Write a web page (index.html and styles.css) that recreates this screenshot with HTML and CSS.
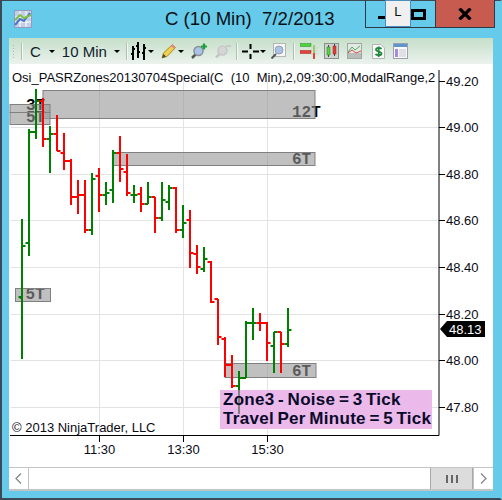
FILE: index.html
```html
<!DOCTYPE html>
<html lang="en">
<head>
  <meta charset="UTF-8">
  <title>C (10 Min) 7/2/2013</title>
  <link rel="stylesheet" href="styles.css">
</head>
<body>
  <div class="window">

    <!-- Title bar -->
    <header class="titlebar">
      <svg class="app-icon" width="18" height="18" viewBox="0 0 18 18">
        <rect x="0.5" y="0.5" width="17" height="17" fill="#c4cfe6" stroke="#8d9cc0"/>
        <path d="M1 7H17M1 12H17M6 1V17M12 1V17" stroke="#fff" fill="none"/>
        <path d="M1 15L6 9L10 11L16 3" stroke="#4a74c4" stroke-width="2" fill="none"/>
        <path d="M1 10L6 5L10 8L17 5" stroke="#7cc04a" stroke-width="2" fill="none"/>
      </svg>
      <h1 class="title">C (10 Min)&nbsp; 7/2/2013</h1>
      <div class="controls">
        <span class="ctl-min"></span>
        <span class="ctl-tip">L</span>
        <span class="ctl-max"></span>
        <span class="ctl-close">
          <svg width="14" height="12" viewBox="0 0 14 12"><path d="M1.500 0.500L12.500 11.500M12.500 0.500L1.500 11.500" stroke="#000" stroke-width="3.200"/></svg>
        </span>
      </div>
    </header>

    <div class="panel">

      <!-- Toolbar -->
      <div class="toolbar">
        <span class="grip"></span>
        <span class="sep sep-first"></span>
        <span class="tb-text tb-symbol">C</span><span class="caret caret-symbol"></span>
        <span class="tb-text tb-period">10 Min</span><span class="caret caret-period"></span>
        <span class="sep sep-bars"></span>

        <svg class="tb-icon" width="16" height="18" viewBox="0 0 16 18">
          <path d="M2 4V18M7 0V16M13 2V18" stroke="#000" stroke-width="2" fill="none"/>
          <path d="M0 12H2M2 7H4M5 4H7M7 10H9M11 11H13M13 6H15" stroke="#000" stroke-width="2" fill="none"/>
        </svg>
        <span class="caret caret-bars"></span>

        <svg class="tb-icon icon-pencil" width="16" height="16" viewBox="0 0 16 16">
          <path d="M1 15L2.500 10L11.500 1.500L14.500 4.500L6 13.500Z" fill="#f3d04a" stroke="#a78a2c"/>
          <path d="M11.500 1.500L14.500 4.500L13 6L10 3Z" fill="#e58a8a"/>
          <path d="M1 15L2.500 11L5 13.500Z" fill="#444"/>
        </svg>
        <span class="caret caret-pencil"></span>

        <svg class="tb-icon icon-add" width="16" height="16" viewBox="0 0 16 16">
          <path d="M1 15L5 11" stroke="#555" stroke-width="2.500"/>
          <circle cx="7.500" cy="8" r="4.500" fill="#a9c4e6" stroke="#8a8f98" stroke-width="1.500"/>
          <path d="M13 0.500V6.500M10 3.500H16" stroke="#18a03c" stroke-width="2.200"/>
        </svg>
        <svg class="tb-icon icon-gray" width="16" height="14" viewBox="0 0 16 14">
          <path d="M1 13.500L5 9.500" stroke="#c4c4c4" stroke-width="2.500"/>
          <circle cx="7.500" cy="6.500" r="4.500" fill="#d5d5d5" stroke="#c6c6c6" stroke-width="1.500"/>
          <path d="M11 2H16" stroke="#c8c8c8" stroke-width="2"/>
        </svg>
        <span class="sep sep-cross"></span>

        <svg class="tb-icon icon-cross" width="17" height="15" viewBox="0 0 17 15">
          <path d="M0 7.500H6M11 7.500H17M8.500 0V5M8.500 10V15" stroke="#000" stroke-width="2"/>
        </svg>
        <span class="caret caret-cross"></span>

        <svg class="tb-icon icon-search" width="15" height="16" viewBox="0 0 15 16">
          <rect x="2.500" y="0.500" width="12" height="13" fill="#f6f6f6" stroke="#b5b5b5"/>
          <circle cx="8" cy="7" r="4" fill="#a9c4e6" stroke="#96a0ae"/>
          <path d="M0.500 15.500L5 11" stroke="#555" stroke-width="2"/>
        </svg>
        <span class="sep sep-tools"></span>

        <svg class="tb-icon icon-colors" width="18" height="16" viewBox="0 0 18 16">
          <path d="M11 5H18M11 8H18M11 11H18" stroke="#c8d6c8"/>
          <rect x="0" y="0.500" width="11" height="3" fill="#4cd43c" stroke="#2c8a24" stroke-width="0.500"/>
          <rect x="0" y="7.500" width="11" height="3" fill="#e8403c" stroke="#a02420" stroke-width="0.500"/>
          <rect x="13" y="2" width="2" height="14" fill="#9acb6c"/>
          <rect x="13" y="10" width="2" height="6" fill="#e8403c"/>
        </svg>
        <svg class="tb-icon icon-framed" width="15" height="16" viewBox="0 0 15 16">
          <rect x="0.500" y="0.500" width="14" height="15" fill="#cfd3cf" stroke="#8b8f8b"/>
          <path d="M4.500 2V14M10.500 1V13" stroke="#444" fill="none"/>
          <rect x="3" y="4" width="3" height="8" fill="#54d63a" stroke="#2f7a22" stroke-width="0.500"/>
          <rect x="9" y="3" width="3" height="8" fill="#e23c34" stroke="#8a2420" stroke-width="0.500"/>
        </svg>
        <svg class="tb-icon icon-lines" width="15" height="16" viewBox="0 0 15 16">
          <rect x="0.500" y="0.500" width="14" height="15" fill="#e4e8e4" stroke="#a3a7a3"/>
          <rect x="1" y="10" width="13" height="5" fill="#b9bdb9"/>
          <path d="M1 9L5 4L8 7L13 3" stroke="#49b05c" fill="none"/>
          <path d="M1 10L5 7L9 10L14 8" stroke="#d8504c" fill="none"/>
        </svg>
        <svg class="tb-icon icon-dollar" width="13" height="15" viewBox="0 0 13 15">
          <path d="M0.500 0.500H9L12.500 4V14.500H0.500Z" fill="#fbfbfb" stroke="#b5b5b5"/>
          <path d="M9.500 5C8.500 3.500 4 3.500 4 5.800C4 8 9.500 7 9.500 9.500C9.500 11.800 4.500 11.500 3.500 10M6.700 2.500V13" stroke="#1f8a3a" stroke-width="1.800" fill="none"/>
        </svg>
        <svg class="tb-icon icon-table" width="15" height="16" viewBox="0 0 15 16">
          <rect x="0.500" y="0.500" width="14" height="15" fill="#fafafa" stroke="#9c9fb0"/>
          <rect x="1" y="1" width="13" height="3" fill="#5d95cf"/>
          <rect x="2" y="6" width="3" height="8" fill="#a58ae0"/>
          <path d="M6 7H13M6 9H13M6 11H13M6 13H13" stroke="#c5c5d0"/>
        </svg>
      </div>

      <!-- Chart -->
      <svg class="chart" width="484" height="403" viewBox="9 64 484 403">
        <path class="grid" d="M11 127.500H439M11 174.500H439M11 220.500H439M11 267.500H439M11 314.500H439M11 360.500H439M11 407.500H439"/>
        <path class="grid" d="M99.500 81V435M183.500 81V435M267.500 81V435"/>

        <text class="legend" x="12" y="82" xml:space="preserve">Osi_PASRZones20130704Special(C  (10  Min),2,09:30:00,ModalRange,2</text>

        <!-- zone labels, the boxes are drawn over them -->
        <text class="zone-text" x="26" y="110">3T</text>
        <text class="zone-text" x="26" y="122">5T</text>
        <text class="zone-text" x="292" y="117">12T</text>
        <text class="zone-text" x="292" y="164">6T</text>
        <text class="zone-text" x="16" y="299">.5T</text>
        <text class="zone-text" x="292" y="376">6T</text>

        <rect class="zone" x="43" y="90.500" width="272" height="28"/>
        <rect class="zone" x="10" y="104.500" width="40" height="8"/>
        <rect class="zone" x="10" y="112.500" width="40" height="12"/>
        <rect class="zone" x="113" y="152.500" width="202" height="13"/>
        <rect class="zone" x="15.500" y="288.500" width="35" height="13"/>
        <rect class="zone" x="225" y="363.500" width="91" height="14"/>

        <!-- OHLC bars: high-low line, open tick left, close tick right -->
        <path class="bar-up" d="M22 219V359M18.500 297H22M22 246H25.500
          M29 129V256M25.500 243H29M29 132H32.500
          M36 89V139M32.500 132H36M36 101H39.500
          M50 126V173M46.500 139H50M50 134H53.500
          M92 173V235M88.500 230H92M92 179H95.500
          M106 182V205M102.500 195H106M106 193H109.500
          M113 150V203M109.500 190H113M113 153H116.500
          M134 185V203M130.500 195H134M134 195H137.500
          M148 182V204M144.500 204H148M148 197H151.500
          M162 182V221M158.500 218H162M162 200H165.500
          M169 185V210M165.500 202H169M169 188H172.500
          M183 205V238M179.500 230H183M183 223H186.500
          M204 247V272M200.500 269H204M204 259H207.500
          M239 371V390M235.500 386H239M239 378H242.500
          M246 321V378M242.500 378H246M246 323H249.500
          M253 308V340M249.500 323H253M253 323H256.500
          M274 332V373M270.500 346H274M274 332H277.500
          M288 308V347M284.500 344H288M288 330H291.500"/>
        <path class="bar-down" d="M43 98V147M39.500 101H43M43 139H46.500
          M57 115V151M53.500 134H57M57 151H60.500
          M64 133V170M60.500 153H64M64 161H67.500
          M71 159V205M67.500 161H71M71 197H74.500
          M78 180V214M74.500 197H78M78 195H81.500
          M85 180V233M81.500 195H85M85 230H88.500
          M99 168V212M95.500 176H99M99 195H102.500
          M120 136V182M116.500 153H120M120 169H123.500
          M127 154V196M123.500 172H127M127 193H130.500
          M141 187V212M137.500 194H141M141 204H144.500
          M155 197V233M151.500 197H155M155 218H158.500
          M176 187V233M172.500 188H176M176 230H179.500
          M190 210V268M186.500 220H190M190 253H193.500
          M197 245V274M193.500 254H197M197 267H200.500
          M211 261V303M207.500 262H211M211 302H214.500
          M218 299V345M214.500 299H218M218 337H221.500
          M225 337V377M221.500 339H225M225 365H228.500
          M232 355V388M228.500 365H232M232 386H235.500
          M260 313V331M256.500 323H260M260 323H263.500
          M267 322V361M263.500 323H267M267 343H270.500
          M281 332V373M277.500 332H281M281 344H284.500"/>

        <!-- note box -->
        <rect class="note" x="220" y="390" width="212" height="39"/>
        <path class="bar-under" d="M239 390V414"/>
        <text class="note-text" x="223" y="405">Zone3 - Noise = 3 Tick</text>
        <text class="note-text" x="223" y="424">Travel Per Minute = 5 Tick</text>

        <text class="copyright" x="12" y="432">© 2013 NinjaTrader, LLC</text>

        <!-- axes -->
        <path class="axis" d="M439 70V435.500H10M439 81.500H445M439 127.500H445M439 174.500H445M439 220.500H445M439 267.500H445M439 314.500H445M439 360.500H445M439 407.500H445M99.500 435V442M183.500 435V442M267.500 435V442"/>
        <text class="price" x="446" y="86">49.20</text>
        <text class="price" x="446" y="132">49.00</text>
        <text class="price" x="446" y="179">48.80</text>
        <text class="price" x="446" y="225">48.60</text>
        <text class="price" x="446" y="272">48.40</text>
        <text class="price" x="446" y="319">48.20</text>
        <text class="price" x="446" y="365">48.00</text>
        <text class="price" x="446" y="412">47.80</text>
        <text class="time" x="99.500" y="454">11:30</text>
        <text class="time" x="183.500" y="454">13:30</text>
        <text class="time" x="267.500" y="454">15:30</text>

        <path class="last-tag" d="M440 329L447 321H485V337H447Z"/>
        <text class="last-text" x="449" y="334">48.13</text>
      </svg>

      <!-- Scrollbar -->
      <div class="scrollbar">
        <span class="sb-btn">
          <svg width="7" height="11" viewBox="0 0 7 11"><path d="M6 0.500L1 5.500L6 10.500" stroke="#888" stroke-width="1.300" fill="none"/></svg>
        </span>
        <span class="sb-track"></span>
        <span class="sb-thumb"><i></i><i></i><i></i></span>
        <span class="sb-btn">
          <svg width="7" height="11" viewBox="0 0 7 11"><path d="M1 0.500L6 5.500L1 10.500" stroke="#888" stroke-width="1.300" fill="none"/></svg>
        </span>
      </div>
    </div>
  </div>
</body>
</html>
```

FILE: styles.css
```css
* { margin: 0; padding: 0; box-sizing: border-box; }

body {
  font-family: "Liberation Sans", Arial, sans-serif;
  background-color: #fff;
}

.window {
  display: flex;
  flex-direction: column;
  width: 502px;
  height: 500px;
  padding: 0 7px 7px 7px;
  background-color: #66cbea;
  border: 2px solid #3b4a55;
  border-top-width: 1px;
  border-right-color: #66cbea;
}

/* Title bar */
.titlebar {
  position: relative;
  display: flex;
  align-items: flex-start;
  height: 37px;
  flex-shrink: 0;
}

.app-icon {
  margin: 9px 0 0 5px;
}

.title {
  position: absolute;
  left: 156px;
  top: 7px;
  font-size: 18.6px;
  font-weight: normal;
  line-height: 22px;
  color: #0b0f14;
  white-space: nowrap;
}

.controls {
  position: absolute;
  top: -1px;
  right: -2px;
  display: flex;
  width: 130px;
  height: 28px;
  border: 1px solid #2c3a45;
  border-top: none;
}

.ctl-min {
  width: 7px;
  height: 3px;
  margin: 16px 0 0 12px;
  background-color: #000;
}

.ctl-tip {
  width: 26px;
  height: 27px;
  border: 1px solid #4a8fc0;
  background-color: #f0f0f0;
  font-size: 13px;
  line-height: 22px;
  text-align: center;
  color: #111;
}

.ctl-max {
  width: 15px;
  height: 11px;
  margin-top: 9px;
  border: 3px solid #000;
}

.ctl-close {
  display: flex;
  align-items: center;
  justify-content: center;
  width: 60px;
  margin-left: 9px;
  background-color: #c75b50;
  border-left: 1px solid #2c3a45;
}

/* Main panel */
.panel {
  display: flex;
  flex-direction: column;
  flex: 1;
  background-color: #fff;
}

.toolbar {
  position: relative;
  display: flex;
  align-items: center;
  height: 26px;
  flex-shrink: 0;
  padding-left: 3px;
  background: linear-gradient(#c5dfc9, #ecf2ed);
}

.grip {
  width: 3px;
  height: 14px;
  background-image: radial-gradient(#a9b5ab 1px, transparent 1px);
  background-size: 3px 3px;
}

.sep {
  width: 1px;
  height: 17px;
  background-color: #b3bfb5;
  border-right: 1px solid #f4f8f4;
  box-sizing: content-box;
}

.sep-first { margin-left: 6px; }
.sep-bars { margin-left: 6px; }
.sep-cross { margin-left: 5px; }
.sep-tools { margin-left: 7px; }

.tb-text {
  font-size: 15px;
  color: #10202c;
}

.tb-symbol { margin-left: 7px; }
.tb-period { margin-left: 7px; }

.caret {
  width: 0;
  height: 0;
  border-left: 3px solid transparent;
  border-right: 3px solid transparent;
  border-top: 3px solid #000;
}

.caret-symbol { margin-left: 8px; }
.caret-period { margin-left: 7px; }
.caret-bars { margin-left: 1px; }
.caret-pencil { margin-left: 1px; }
.caret-cross { margin-left: 1px; }

.tb-icon { flex-shrink: 0; }
.tb-icon:first-of-type { margin-left: 3px; }
.icon-pencil { margin-left: 7px; }
.icon-add { margin-left: 7px; }
.icon-gray { margin-left: 8px; }
.icon-cross { margin-left: 4px; }
.icon-search { margin-left: 5px; }
.icon-colors { margin-left: 5px; }
.icon-framed { margin-left: 6px; }
.icon-lines { margin-left: 8px; }
.icon-dollar { margin-left: 10px; }
.icon-table { margin-left: 8px; }

/* Chart */
.chart {
  display: block;
  flex-shrink: 0;
}

.grid {
  stroke: #e3e3e3;
  fill: none;
}

.axis {
  stroke: #000;
  fill: none;
}

.legend,
.copyright,
.price,
.time {
  font-size: 13px;
  fill: #0a0a14;
}

.legend { white-space: pre; }

.time { text-anchor: middle; }

.zone-text {
  font-family: "Liberation Mono", "Courier New", monospace;
  font-size: 16px;
  font-weight: bold;
  fill: #000;
}

.zone {
  fill: rgba(150, 150, 150, 0.6);
  stroke: #808080;
}

.bar-up,
.bar-down,
.bar-under {
  fill: none;
  stroke-width: 2;
}

.bar-up { stroke: #008000; }
.bar-down { stroke: #ff0000; }
.bar-under { stroke: #808080; }

.note { fill: #ebb9ea; }

.note-text {
  font-size: 17px;
  font-weight: bold;
  letter-spacing: 0.3px;
  word-spacing: -1.5px;
  fill: #0a0a2a;
}

.last-tag { fill: #000; }

.last-text {
  font-size: 13px;
  fill: #fff;
}

/* Scrollbar */
.scrollbar {
  display: flex;
  flex: 1;
  border-top: 1px solid #c4c4c4;
  border-bottom: 2px solid #c4c4c4;
}

.sb-btn {
  display: flex;
  align-items: center;
  justify-content: center;
  width: 20px;
}

.sb-btn:first-child { border-right: 1px solid #c4c4c4; }
.sb-btn:last-child { border-left: 1px solid #c4c4c4; }

.sb-track { flex: 1; }

.sb-thumb {
  display: flex;
  align-items: center;
  justify-content: center;
  gap: 3px;
  width: 43px;
  background-color: #dcdcdc;
  border-left: 1px solid #a8a8a8;
  border-right: 1px solid #a8a8a8;
}

.sb-thumb i {
  width: 2px;
  height: 8px;
  background-color: #666;
}
```
